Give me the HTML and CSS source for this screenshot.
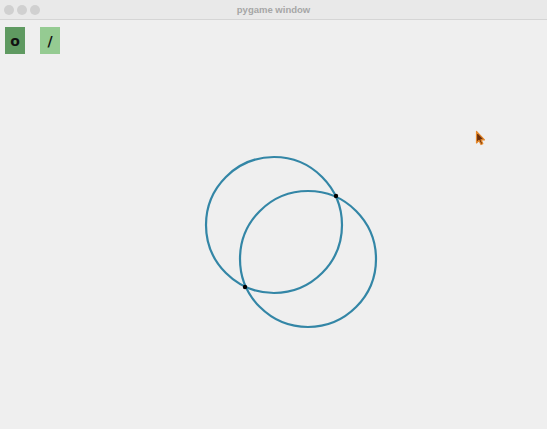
FILE: index.html
```html
<!DOCTYPE html>
<html lang="en">
<head>
    <meta charset="UTF-8">
    <title>pygame window</title>
    <link rel="stylesheet" href="styles.css">
</head>
<body>
    <div class="window">
        <!-- 타이틀바 -->
        <header class="titlebar">
            <div class="lights">
                <span></span><span></span><span></span>
            </div>
            <div class="title">pygame window</div>
        </header>
        <!-- 캔버스 -->
        <main class="canvas">
            <nav class="tools">
                <button class="tool active">o</button>
                <button class="tool">/</button>
            </nav>
            <svg class="board" viewBox="0 20 547 409" width="547" height="409">
                <circle cx="274" cy="225" r="68" class="shape"/>
                <circle cx="308" cy="259" r="68" class="shape"/>
                <circle cx="336" cy="196" r="2.2" class="dot"/>
                <circle cx="245" cy="287" r="2.2" class="dot"/>
                <!-- 마우스 커서 -->
                <path class="cursor" d="M476.5 131.5 L476.5 143 L479 140.5 L481 144.5 L482.8 143.6 L481 139.8 L484.5 139.8 Z"/>
            </svg>
        </main>
    </div>
</body>
</html>
```
FILE: styles.css
```css
body{
    margin: 0;
    width: 547px;
    height: 429px;
    overflow: hidden;
    background: #efefef;
    font-family: "Liberation Sans", Arial, sans-serif;
}
.window{
    display: flex;
    flex-direction: column;
    height: 429px;
}
.titlebar{
    position: relative;
    height: 19px;
    flex: none;
    display: flex;
    align-items: center;
    justify-content: center;
    background: #e9e9e9;
    border-bottom: 1px solid #d5d5d5;
}
.lights{
    position: absolute;
    left: 3.5px;
    top: 4.5px;
    display: flex;
    gap: 3px;
}
.lights span{
    width: 10px;
    height: 10px;
    border-radius: 50%;
    background: #d0d0d0;
}
.title{
    font-size: 9.5px;
    font-weight: bold;
    color: #a6a6a6;
}
.canvas{
    position: relative;
    flex: 1;
    background: #efefef;
}
.tools{
    position: relative;
    z-index: 1;
    display: flex;
    gap: 15px;
    padding: 7px 0 0 5px;
}
.tool{
    width: 20px;
    height: 27px;
    padding: 0;
    border: none;
    background: #95cb92;
    color: #111;
    font-family: "DejaVu Sans", sans-serif;
    font-size: 14px;
    font-weight: bold;
}
.tool.active{
    background: #5f9a61;
}
.board{
    position: absolute;
    left: 0;
    top: 0;
}
.shape{
    fill: none;
    stroke: #3386a6;
    stroke-width: 2.2;
}
.dot{
    fill: #000;
}
.cursor{
    fill: #6b2f0c;
    stroke: #e5892c;
    stroke-width: 1.2;
    stroke-linejoin: round;
}
```
